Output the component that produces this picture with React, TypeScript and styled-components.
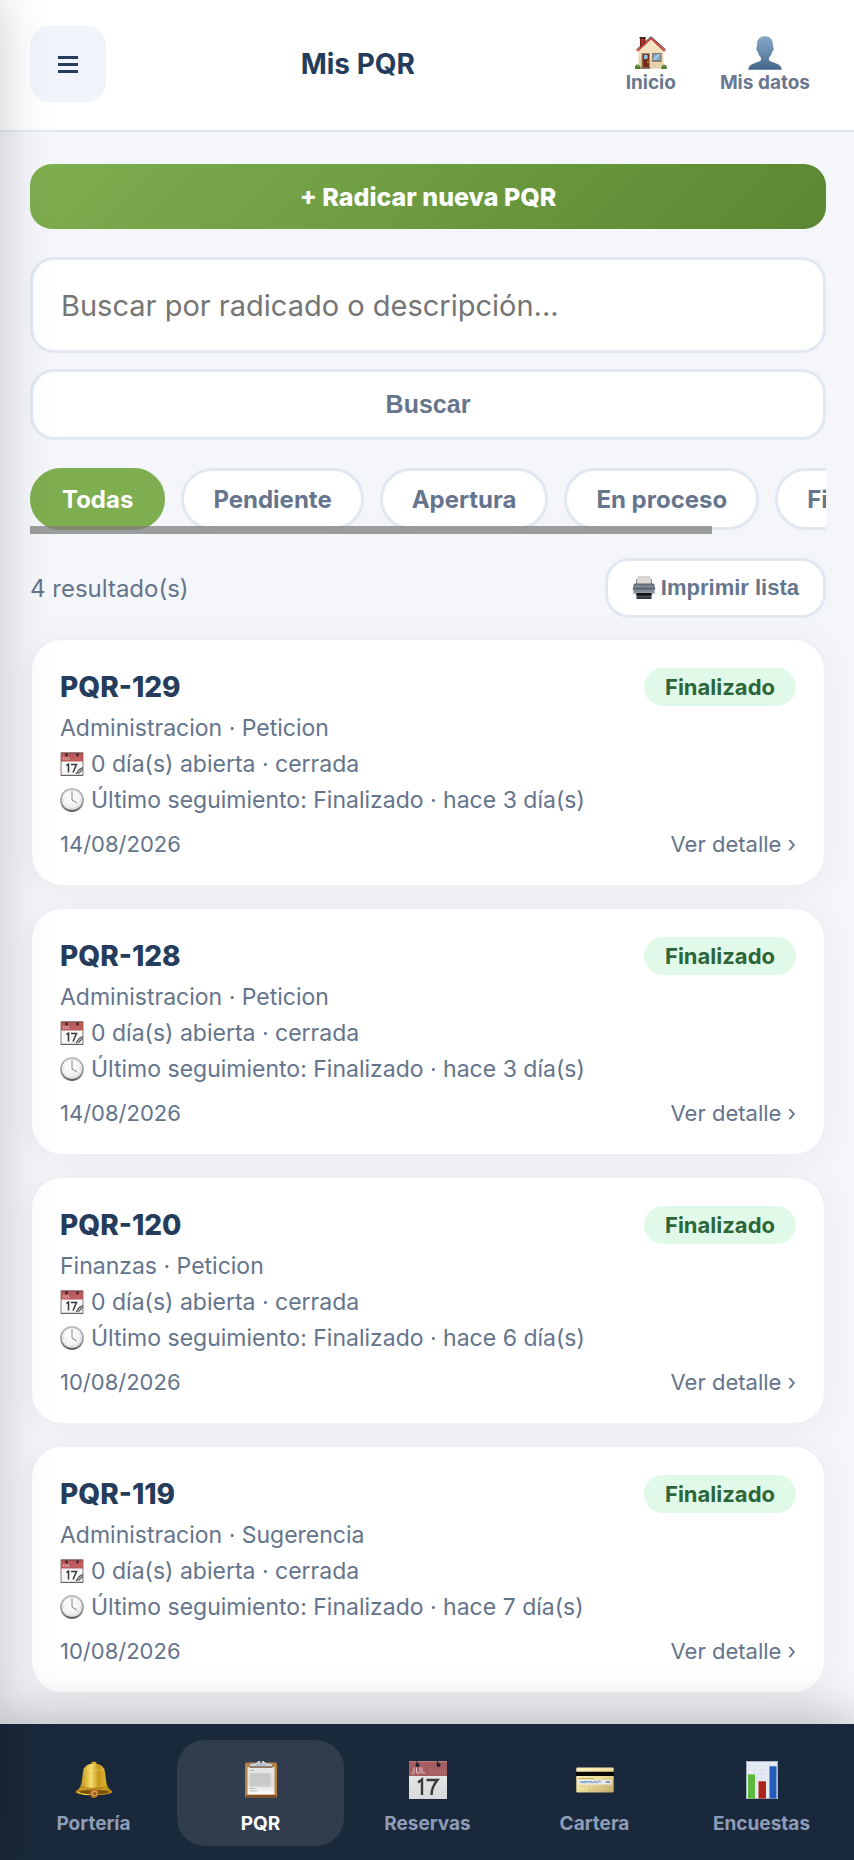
import React, { useId, useState } from "react";
import styled, { createGlobalStyle, css } from "styled-components";

const GlobalStyle = createGlobalStyle`
  *, *::before, *::after { box-sizing: border-box; }
  body {
    margin: 0;
    background: #f4f6fa;
    font-family: Inter, "Liberation Sans", sans-serif;
    color: #64748b;
  }
  button, input { font: inherit; color: inherit; }
`;

/* ---------- icons ---------- */

type IconProps = { size?: number };

const MenuIcon = () => (
  <svg width="20" height="17" viewBox="0 0 20 17" aria-hidden="true">
    <path d="M0 0h20v3H0zM0 7h20v3H0zM0 14h20v3H0z" fill="currentColor" />
  </svg>
);

const HouseIcon = ({ size = 34 }: IconProps) => {
  const id = useId();
  return (
    <svg width={size} height={size} viewBox="0 0 34 34" aria-hidden="true">
      <defs>
        <linearGradient id={id} x1="0" y1="0" x2="0" y2="1">
          <stop offset="0" stopColor="#fbeccd" />
          <stop offset="1" stopColor="#e3cfa6" />
        </linearGradient>
      </defs>
      <path d="M6 1h5.500v9L6 15z" fill="#7d2018" />
      <path d="M5.500 1h6v1.500h-6z" fill="#3a2624" />
      <path d="M7 3h3v7l-3 3z" fill="#b03226" />
      <path d="M4.500 14 17 3l12.500 11v18.500h-25z" fill={`url(#${id})`} />
      <path d="M2.500 14.500 17 1.200l14.500 13.300-1.600 1L17 3.600 4.100 15.600z" fill="#c93a34" />
      <path d="M2.500 13.600 17 .7l14.500 12.900" fill="none" stroke="#46302f" strokeWidth="1" />
      <rect x="7.500" y="17" width="8.500" height="15.500" fill="#a58c6c" />
      <rect x="8.600" y="18" width="6.400" height="14.500" fill="#74301f" />
      <rect x="10" y="19" width="3.600" height="4" fill="#8cc3ee" />
      <circle cx="14" cy="26" r=".8" fill="#e4ae42" />
      <rect x="18" y="17" width="9.600" height="9" fill="#8b7967" />
      <rect x="19.500" y="18.300" width="6.600" height="6" fill="#76acdc" />
      <path d="m19.500 22 4-3.700h2.600v1L20.500 24.300h-1z" fill="#9dc9ec" />
      <path d="M6.500 31.500h10v1.500h-10z" fill="#8d8170" />
      <path d="M1 32.500c-.5-2.500 1.500-5 4-3.500 1.500 1 2 2.500 1.500 4H1zM27.500 33c-.5-2.500 1-4.500 3-4.500 2 .5 3 2.500 2 4.500z" fill="#4f7a2e" />
      <circle cx="4" cy="30" r="1.200" fill="#82a951" />
      <circle cx="30" cy="30" r="1" fill="#82a951" />
    </svg>
  );
};

const PersonIcon = ({ size = 34 }: IconProps) => {
  const id = useId();
  return (
    <svg width={size} height={size} viewBox="0 0 34 34" aria-hidden="true">
      <defs>
        <linearGradient id={id} x1="0" y1="0" x2="0" y2="1">
          <stop offset="0" stopColor="#86a8c6" />
          <stop offset=".55" stopColor="#6588a9" />
          <stop offset="1" stopColor="#426488" />
        </linearGradient>
      </defs>
      <path
        fill={`url(#${id})`}
        d="M17 .3c-5 0-8 3.400-8 8.200v2.200c-1 .2-.8 1.700-.5 3 .3 1.200.7 1.900 1.400 2 .5 2.800 1.600 4.600 3.200 6v2.400c-1 1.500-3.700 2-6.600 3.100C3 28.400.7 29.600.3 33.800h33.400c-.4-4.200-2.700-5.400-6.200-6.600-2.900-1.100-5.600-1.600-6.600-3.100v-2.400c1.600-1.400 2.700-3.200 3.200-6 .7-.1 1.100-.8 1.400-2 .3-1.300.5-2.800-.5-3V8.500C25 3.700 22 .3 17 .3z"
      />
    </svg>
  );
};

const PrinterIcon = ({ size = 24 }: IconProps) => {
  const id = useId();
  return (
    <svg width={size} height={size} viewBox="0 0 24 24" aria-hidden="true">
      <defs>
        <linearGradient id={id} x1="0" y1="0" x2="0" y2="1">
          <stop offset="0" stopColor="#59636e" />
          <stop offset=".35" stopColor="#87919b" />
          <stop offset=".5" stopColor="#69737d" />
          <stop offset="1" stopColor="#a3abb2" />
        </linearGradient>
      </defs>
      <path d="M6 .8h12l1 8H5z" fill="#ddd8d3" stroke="#b5afa9" strokeWidth=".6" />
      <path d="M4.500 3v6h15V3" fill="none" stroke="#77736f" strokeWidth=".8" />
      <path d="M3 7.500h18c1.500 0 2 2 2.200 5v4.200c0 1-.6 1.300-1.500 1.300H2.300C1.400 18 .8 17.700.8 16.700v-4.200c.2-3 .7-5 2.200-5z" fill={`url(#${id})`} />
      <path d="M1.500 12.300h21" stroke="#4b5761" strokeWidth="1" />
      <path d="M1.500 14v3M22.500 14v3" stroke="#cad3da" strokeWidth="1" />
      <path d="M4.500 17h15v6h-15z" fill="#34383c" />
      <path d="M4.500 17h15v2.500h-15z" fill="#111315" />
      <path d="M5 20.500h14" stroke="#5c6165" strokeWidth=".8" />
    </svg>
  );
};

const DayIcon = ({ size = 24 }: IconProps) => (
  <svg width={size} height={size} viewBox="0 0 24 24" aria-hidden="true">
    <rect x="1" y="1" width="22" height="22.500" fill="#f7f7f7" stroke="#6d5e60" strokeWidth=".8" />
    <path d="M1 1h22v8.500H1z" fill="#bd5a5c" />
    <path d="M1 1h22" stroke="#72484b" strokeWidth="1" />
    <circle cx="6.500" cy="3" r="1.400" fill="#3b2527" />
    <circle cx="17.500" cy="3" r="1.400" fill="#3b2527" />
    <path d="M3.500 5v2.500H2.800M5 5v2.500h1.800V5M8.500 5v2.500H10" fill="none" stroke="#f0cfcf" strokeWidth=".6" />
    <path d="M13 6h8M13 7.500h8" stroke="#cb8182" strokeWidth=".6" strokeDasharray="1 1" />
    <path d="m6.500 13.500 2-1.300v8.300M11 12.500h5.500l-3.500 8" fill="none" stroke="#38383b" strokeWidth="1.500" />
    <path d="m23 15-4 2-3.500 5.500 4-1L23 17z" fill="#aaa" />
    <path d="m16 22 3-4.500 4-2M18.500 21.500l4.500-4" fill="none" stroke="#3f3e40" strokeWidth="1" />
    <path d="M1 23.300h22" stroke="#66595b" strokeWidth="1" />
  </svg>
);

const ClockIcon = ({ size = 24 }: IconProps) => {
  const id = useId();
  return (
    <svg width={size} height={size} viewBox="0 0 24 24" aria-hidden="true">
      <defs>
        <linearGradient id={id} x1="0" y1="0" x2="0" y2="1">
          <stop offset="0" stopColor="#bcc0c5" />
          <stop offset=".7" stopColor="#96989b" />
          <stop offset="1" stopColor="#5f6062" />
        </linearGradient>
        <radialGradient id={`${id}f`} cx=".45" cy=".35" r=".65">
          <stop offset="0" stopColor="#fff" />
          <stop offset=".7" stopColor="#f1f1f1" />
          <stop offset="1" stopColor="#d2d2d3" />
        </radialGradient>
      </defs>
      <circle cx="12" cy="12" r="11" fill={`url(#${id}f)`} stroke={`url(#${id})`} strokeWidth="1.800" />
      <path d="M12 3.500V12l5 3" fill="none" stroke="#818286" strokeWidth="1" />
      <path d="M12 2.500v1M21 12h-1M12 21.500v-1M3 12h1" stroke="#aaa" strokeWidth=".7" />
    </svg>
  );
};

const BellIcon = () => {
  const id = useId();
  return (
    <svg width="38" height="38" viewBox="0 0 38 38" aria-hidden="true">
      <defs>
        <linearGradient id={id}>
          <stop offset="0" stopColor="#a97a10" />
          <stop offset=".28" stopColor="#dcb53a" />
          <stop offset=".42" stopColor="#f3df70" />
          <stop offset=".62" stopColor="#c9981c" />
          <stop offset=".8" stopColor="#d9b030" />
          <stop offset="1" stopColor="#8e600b" />
        </linearGradient>
      </defs>
      <path d="M16.500 1.500c0-1 5-1 5 0l-.8 2.800h-3.400z" fill="#d9ad2f" />
      <path d="M19 2.500c-7 0-10.500 3.500-11.200 9.500-.7 7-1.300 12.500-3.800 15.500L.7 30.800c-.5 1.500 8 3.200 18.300 3.200s18.800-1.700 18.300-3.200L34 27.500c-2.500-3-3.100-8.500-3.800-15.500C29.500 6 26 2.500 19 2.500z" fill={`url(#${id})`} />
      <path d="M8.500 7.500c4 2.500 17 2.500 21 0" fill="none" stroke="#f5df70" strokeWidth=".8" opacity=".6" />
      <path d="M5.500 25.500c7 2.500 20 2.500 27 0" fill="none" stroke="#8f6810" strokeWidth="1.200" opacity=".7" />
      <ellipse cx="19" cy="30.800" rx="18.200" ry="3.200" fill="#c28d1a" />
      <ellipse cx="19" cy="31" rx="15" ry="2" fill="#784d0b" />
      <path d="M3 31.500c3 1.600 7 2 11 2.200" fill="none" stroke="#f4ea4b" strokeWidth="1" />
      <circle cx="19" cy="32.600" r="4.500" fill="#a96b23" />
      <circle cx="19.500" cy="32.200" r="3" fill="#dc9b4b" />
      <circle cx="19.700" cy="32.500" r="1.500" fill="#8a531b" />
    </svg>
  );
};

const ClipboardIcon = () => {
  const id = useId();
  return (
    <svg width="38" height="38" viewBox="0 0 38 38" aria-hidden="true">
      <defs>
        <linearGradient id={id} x1="0" y1="0" x2="0" y2="1">
          <stop offset="0" stopColor="#e8e8e9" />
          <stop offset=".6" stopColor="#dcdcdc" />
          <stop offset="1" stopColor="#fff" />
        </linearGradient>
      </defs>
      <rect x="3" y="1.500" width="32" height="35" rx="1.500" fill="#b58147" />
      <path d="M4 34h30v2.500H4z" fill="#805020" />
      <path d="M5.500 6h27v27.500h-27z" fill={`url(#${id})`} />
      <path d="M8 9.500h4M8 27.500h5M8 30h7" stroke="#aaa" strokeWidth=".8" />
      <path d="M8 12h20.500v13.500H8z" fill="#cacbcc" />
      <path d="M8 14.500h20M8 17h20M8 19.500h18M8 22h20" stroke="#bcbdbe" strokeWidth=".6" strokeDasharray="3 1" />
      <path d="M8 3.500c2-1.500 6-.5 7.500-2.500C16-1.200 22-1.200 22.500 1c1.500 2 5.500 1 7.500 2.500v2H8z" fill="#cdd0d5" />
      <path d="M7.500 5.500h23v1.300h-23z" fill="#715d4a" />
      <circle cx="19" cy="1" r="1.200" fill="#56626f" />
      <path d="M14 3.800h10" stroke="#86a1bd" strokeWidth=".8" />
    </svg>
  );
};

const CalendarIcon = () => {
  const id = useId();
  return (
    <svg width="38" height="38" viewBox="0 0 38 38" aria-hidden="true">
      <defs>
        <linearGradient id={id} x1="0" y1="0" x2="0" y2="1">
          <stop offset="0" stopColor="#ececec" />
          <stop offset="1" stopColor="#d8d9da" />
        </linearGradient>
      </defs>
      <path d="M0 0h38v38H0z" fill={`url(#${id})`} />
      <path d="M0 0h38v15H0z" fill="#a65d60" />
      <path d="M0 .5h38" stroke="#b58082" />
      <path d="M8 0v4M28.500 0v4" stroke="#301f29" strokeWidth="1" />
      <circle cx="8.500" cy="4" r="2" fill="#1a2232" />
      <circle cx="29.500" cy="4" r="2" fill="#1a2232" />
      <path d="M5 6.500v5c0 1.500-2.500 1.500-2.500 0M7.500 6.500v4.500c0 1.800 3.500 1.800 3.500 0V6.500M13 6.500V12h3" fill="none" stroke="#e3c7c9" strokeWidth="1" />
      <path d="M21 8.500h15M21 10.500h15M21 12.500h15" stroke="#b87a7c" strokeWidth=".8" strokeDasharray="1 1" />
      <path d="m9 21.500 4-3V34M17.500 19h11c-5 6-6 10-6 15" fill="none" stroke="#38393b" strokeWidth="2.400" />
    </svg>
  );
};

const CardIcon = () => {
  const id = useId();
  return (
    <svg width="38" height="38" viewBox="0 0 38 38" aria-hidden="true">
      <defs>
        <linearGradient id={id} x1="0" y1="0" x2="1" y2="1">
          <stop offset="0" stopColor="#fff3ba" />
          <stop offset=".5" stopColor="#efe0a0" />
          <stop offset="1" stopColor="#bfa866" />
        </linearGradient>
      </defs>
      <rect x=".3" y="6.500" width="37.400" height="25" rx="1.300" fill={`url(#${id})`} />
      <path d="M0 10.800h38v4.200H0z" fill="#090805" />
      <path d="M2.500 17.500h15" stroke="#aa9e6c" strokeWidth=".8" />
      <path d="M2.500 19h33v4.500h-33z" fill="#e4e8eb" />
      <path d="m4 22 2-2 1 2 2-2v2l3-2 1 2 2-2 1 2 3-2 1 2 3-2 2 1" fill="none" stroke="#5885c3" strokeWidth=".9" />
      <path d="M30 21h4" stroke="#666" strokeWidth="1.300" />
      <path d="M4 25.500h5M12 26h22M12 28.500h23" stroke="#d1bd7e" strokeWidth=".8" strokeDasharray="3 1" />
    </svg>
  );
};

const ChartIcon = () => (
  <svg width="38" height="38" viewBox="0 0 38 38" aria-hidden="true">
    <path d="M3 0h32v38H3z" fill="#e5eaf3" />
    <path d="M3 4.500h32M3 9h32M3 13.500h32M3 18h32M11 0v38M19 0v38M27 0v38" stroke="#d3dbe8" strokeWidth=".6" />
    <path d="M3.500.5h31v37h-31z" fill="none" stroke="#9ba5b4" strokeWidth=".8" />
    <path d="M5 13h7v24.500H5z" fill="#5cb93c" />
    <path d="M15.500 20h7.500v17.500h-7.500z" fill="#ad241a" />
    <path d="M26.500 5h7v32.500h-7z" fill="#235cba" />
    <path d="M5 13.500h7M15.500 20.500H23M26.500 5.500h7" stroke="#fff" strokeOpacity=".25" />
  </svg>
);

/* ---------- layout ---------- */

const Page = styled.div`
  min-height: 100vh;
  display: flex;
  flex-direction: column;
`;

/* Closed side drawer: it rests outside the window and only its shadow is seen. */
const Drawer = styled.aside`
  position: fixed;
  top: 0;
  bottom: 0;
  right: 100%;
  width: 560px;
  z-index: 20;
  pointer-events: none;
  box-shadow: 0 0 48px rgba(0, 0, 0, 0.2);
`;

const Header = styled.header`
  display: flex;
  align-items: center;
  justify-content: space-between;
  padding: 26px 28px 28px 30px;
  background: #fff;
  border-bottom: 2px solid #e2e8f0;
`;

const MenuButton = styled.button`
  width: 76px;
  height: 76px;
  display: grid;
  place-items: center;
  border: 0;
  border-radius: 20px;
  background: #f1f5fb;
  color: #263c5c;
`;

const Title = styled.h1`
  margin: 0;
  font-size: 28px;
  line-height: 36px;
  font-weight: 700;
  color: #263c5c;
`;

const QuickLinks = styled.nav`
  display: flex;
  gap: 12px;
`;

const QuickLink = styled.a`
  display: flex;
  flex-direction: column;
  align-items: center;
  gap: 3px;
  padding: 0 16px;
  font-size: 19px;
  line-height: 20px;
  font-weight: 700;
  color: #6b7890;
  text-decoration: none;
`;

const Main = styled.main`
  flex: 1;
  display: flex;
  flex-direction: column;
  padding: 32px 28px 30px 30px;
`;

const PrimaryButton = styled.button`
  height: 65px;
  border: 0;
  border-radius: 22px;
  background: linear-gradient(135deg, #7fae50, #5a8731);
  color: #fff;
  font-size: 25px;
  font-weight: 800;
`;

const SearchForm = styled.form`
  display: flex;
  flex-direction: column;
  gap: 16px;
  margin: 28px 0;
`;

const outlined = css`
  background: #fff;
  border: 3px solid #e2e8ef;
  border-radius: 24px;
`;

const SearchInput = styled.input`
  ${outlined}
  width: 100%;
  height: 96px;
  padding: 0 28px;
  font-size: 29px;
  &::placeholder { color: #757575; opacity: 1; }
`;

const OutlineButton = styled.button<{ $compact?: boolean }>`
  ${outlined}
  display: flex;
  align-items: center;
  justify-content: center;
  gap: 5px;
  height: ${(p) => (p.$compact ? 60 : 71)}px;
  padding: 0 24px;
  font-family: "Liberation Sans", Arial, sans-serif;
  font-size: ${(p) => (p.$compact ? 22 : 25)}px;
  font-weight: 700;
  color: #66758e;
`;

const FilterBar = styled.div`
  position: relative;
  margin-bottom: 24px;
`;

const FilterTrack = styled.div`
  display: flex;
  gap: 16px;
  padding-bottom: 4px;
  overflow-x: auto;
  scrollbar-width: none;
`;

const ScrollThumb = styled.div`
  position: absolute;
  left: 0;
  bottom: 0;
  height: 8px;
  background: rgba(125, 125, 125, 0.75);
`;

const Chip = styled.button<{ $active: boolean }>`
  flex: none;
  height: 62px;
  padding: 0 29px;
  border: 3px solid ${(p) => (p.$active ? "#7fae50" : "#e2e8ef")};
  border-radius: 31px;
  background: ${(p) => (p.$active ? "#7fae50" : "#fff")};
  color: ${(p) => (p.$active ? "#fff" : "#66758e")};
  font-size: 24px;
  font-weight: 700;
`;

const ResultBar = styled.div`
  display: flex;
  align-items: center;
  justify-content: space-between;
  margin-bottom: 20px;
  font-size: 24px;
`;

const CardList = styled.ul`
  display: flex;
  flex-direction: column;
  gap: 20px;
  margin: 0;
  padding: 0;
  list-style: none;
`;

const Card = styled.li`
  padding: 28px 28px 27px;
  border: 2px solid #eff0f5;
  border-radius: 32px;
  background: #fff;
  background-clip: padding-box;
  box-shadow: 0 4px 32px rgba(0, 0, 0, 0.05);
  font-size: 23px;
  line-height: 36px;
`;

const CardHead = styled.div`
  display: flex;
  align-items: center;
  justify-content: space-between;
  margin-bottom: 4px;
`;

const CardTitle = styled.h2`
  margin: 0;
  font-size: 28px;
  line-height: 36px;
  font-weight: 800;
  color: #263c5c;
`;

const Badge = styled.span`
  padding: 0 21px;
  border-radius: 19px;
  background: #e1f9e8;
  color: #2d6638;
  font-size: 22px;
  line-height: 38px;
  font-weight: 700;
`;

const CardLine = styled.p`
  display: flex;
  align-items: center;
  gap: 7px;
  margin: 0;
`;

const CardFoot = styled.div`
  display: flex;
  justify-content: space-between;
  margin-top: 12px;
  font-size: 22px;
  line-height: 28px;
`;

const DetailLink = styled.a`
  color: inherit;
  text-decoration: none;
`;

const TabBar = styled.nav`
  position: sticky;
  bottom: 0;
  z-index: 10;
  display: grid;
  grid-template-columns: repeat(5, 1fr);
  padding: 16px 9px 14px 10px;
  background: #1a283b;
  box-shadow: 0 -8px 48px rgba(0, 0, 0, 0.25);
`;

const Tab = styled.a<{ $active: boolean }>`
  display: flex;
  flex-direction: column;
  align-items: center;
  gap: 13px;
  padding: 21px 0 10px;
  border-radius: 28px;
  background: ${(p) => (p.$active ? "rgba(255, 255, 255, 0.1)" : "transparent")};
  color: ${(p) => (p.$active ? "#fff" : "#8e9db8")};
  font-size: 19px;
  line-height: 24px;
  font-weight: 700;
  text-decoration: none;
`;

/* ---------- data ---------- */

const filters = ["Todas", "Pendiente", "Apertura", "En proceso", "Finalizado"];

const requests = [
  { id: 129, kind: "Administracion · Peticion", ago: 3, date: "14/08/2026" },
  { id: 128, kind: "Administracion · Peticion", ago: 3, date: "14/08/2026" },
  { id: 120, kind: "Finanzas · Peticion", ago: 6, date: "10/08/2026" },
  { id: 119, kind: "Administracion · Sugerencia", ago: 7, date: "10/08/2026" },
];

const tabs = [
  { label: "Portería", Icon: BellIcon },
  { label: "PQR", Icon: ClipboardIcon },
  { label: "Reservas", Icon: CalendarIcon },
  { label: "Cartera", Icon: CardIcon },
  { label: "Encuestas", Icon: ChartIcon },
];

/* Filter chips with an overlay scroll thumb that follows the track. */
const Filters = () => {
  const [active, setActive] = useState("Todas");
  const [thumb, setThumb] = useState({ left: 0, width: 0 });
  const track = React.useRef<HTMLDivElement>(null);

  const measure = () => {
    const el = track.current;
    if (!el) return;
    const ratio = el.clientWidth / el.scrollWidth;
    setThumb({
      left: el.scrollLeft * ratio,
      width: ratio < 1 ? Math.round(el.clientWidth * ratio) : 0,
    });
  };

  React.useLayoutEffect(() => {
    measure();
    window.addEventListener("resize", measure);
    return () => window.removeEventListener("resize", measure);
  }, []);

  return (
    <FilterBar>
      <FilterTrack ref={track} onScroll={measure}>
        {filters.map((name) => (
          <Chip key={name} type="button" $active={name === active} onClick={() => setActive(name)}>
            {name}
          </Chip>
        ))}
      </FilterTrack>
      <ScrollThumb style={{ left: thumb.left, width: thumb.width }} />
    </FilterBar>
  );
};

export default function App() {
  return (
    <Page>
      <GlobalStyle />
      <Drawer aria-hidden="true" />
      <Header>
        <MenuButton type="button" aria-label="Menú">
          <MenuIcon />
        </MenuButton>
        <Title>Mis PQR</Title>
        <QuickLinks>
          <QuickLink href="#inicio">
            <HouseIcon />
            Inicio
          </QuickLink>
          <QuickLink href="#datos">
            <PersonIcon />
            Mis datos
          </QuickLink>
        </QuickLinks>
      </Header>
      <Main>
        <PrimaryButton type="button">+ Radicar nueva PQR</PrimaryButton>
        <SearchForm onSubmit={(e) => e.preventDefault()}>
          <SearchInput
            type="text"
            aria-label="Buscar por radicado o descripción"
            placeholder="Buscar por radicado o descripción..."
          />
          <OutlineButton type="submit">Buscar</OutlineButton>
        </SearchForm>
        <Filters />
        <ResultBar>
          <span>4 resultado(s)</span>
          <OutlineButton type="button" $compact>
            <PrinterIcon />
            Imprimir lista
          </OutlineButton>
        </ResultBar>
        <CardList>
          {requests.map((r) => (
            <Card key={r.id}>
              <CardHead>
                <CardTitle>PQR-{r.id}</CardTitle>
                <Badge>Finalizado</Badge>
              </CardHead>
              <CardLine>{r.kind}</CardLine>
              <CardLine>
                <DayIcon />
                0 día(s) abierta · cerrada
              </CardLine>
              <CardLine>
                <ClockIcon />
                Último seguimiento: Finalizado · hace {r.ago} día(s)
              </CardLine>
              <CardFoot>
                <span>{r.date}</span>
                <DetailLink href={`#pqr-${r.id}`}>Ver detalle ›</DetailLink>
              </CardFoot>
            </Card>
          ))}
        </CardList>
      </Main>
      <TabBar>
        {tabs.map(({ label, Icon }) => (
          <Tab key={label} href={`#${label}`} $active={label === "PQR"}>
            <Icon />
            {label}
          </Tab>
        ))}
      </TabBar>
    </Page>
  );
}
